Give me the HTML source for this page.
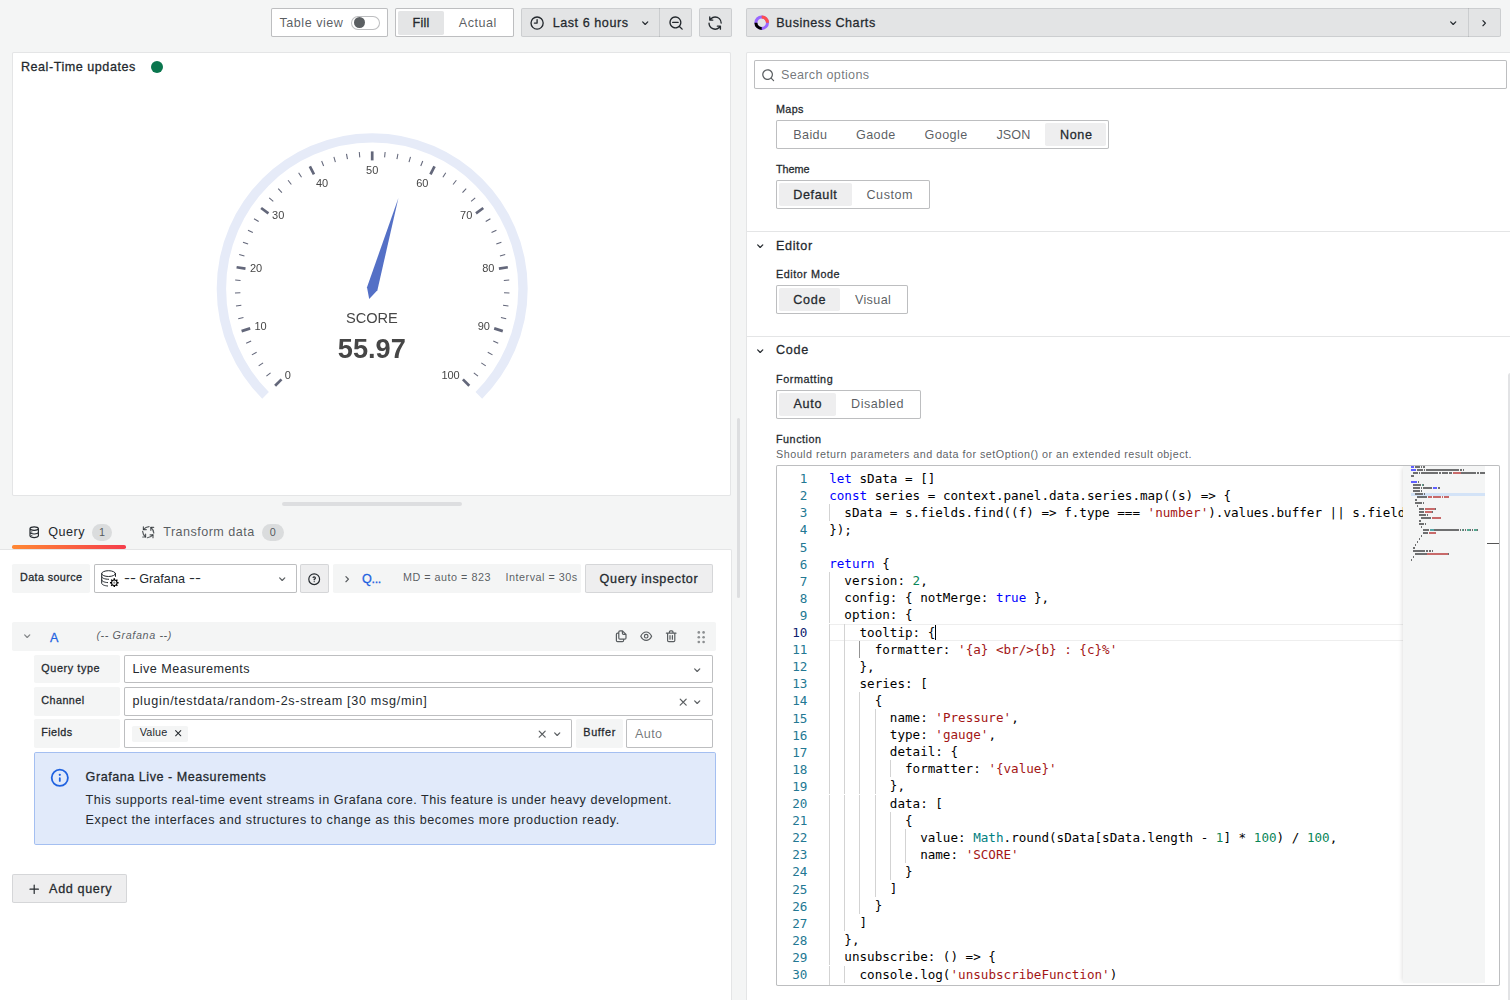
<!DOCTYPE html>
<html lang="en"><head><meta charset="utf-8"><title>Edit panel - Real-Time updates - Grafana</title><style>
html,body{margin:0;padding:0}
body{width:1510px;height:1000px;overflow:hidden;background:#f4f5f5;font-family:'Liberation Sans', sans-serif;font-size:12.6px;color:rgb(36,41,46);position:relative}
#root{position:absolute;left:0;top:0;width:1510px;height:1000px;overflow:hidden}
.b{position:absolute;box-sizing:border-box}
.t{position:absolute;white-space:pre;color:rgb(36,41,46)}
.ic{position:absolute;display:block;overflow:visible}
.sec{color:rgba(36,41,46,0.75)}
.med{font-weight:400;-webkit-text-stroke:0.27px currentColor}
.inp{background:#fff;border:1px solid rgba(36,41,46,0.30);border-radius:1.8px}
.sel{background:rgba(36,41,46,0.12);border-radius:1.8px}
.sel2{background:rgba(36,41,46,0.08);border-radius:1.8px}
.tb{background:rgba(36,41,46,0.08);border:1px solid rgba(36,41,46,0.12);border-radius:1.8px}
.btn{background:rgba(36,41,46,0.08);border:1px solid rgba(36,41,46,0.12);border-radius:1.8px}
.lab{background:#f4f5f5;border-radius:1.8px}
.badge{background:rgba(36,41,46,0.12);border-radius:9px}
.panel{background:#fff;border:1px solid rgba(36,41,46,0.12);border-radius:1.8px}
.cl{position:absolute;white-space:pre;font-family:'DejaVu Sans Mono', 'Liberation Mono', monospace;font-size:12.6px;height:17.1px;line-height:17.1px}
</style></head>
<body><div id="root">
<div class="b inp" style="left:271.20px;top:8.10px;width:116.40px;height:28.80px;"></div>
<div class="t sec" style="left:279.50px;top:12.70px;height:20.2px;line-height:20.2px;font-size:12.6px;"><span style="letter-spacing:0.510px;margin-right:-0.510px">Table view</span></div>
<div class="b " style="left:350.90px;top:15.60px;width:28.80px;height:14.40px;border:1px solid rgba(36,41,46,0.30);border-radius:8px;background:#fff"></div>
<div class="b " style="left:353.70px;top:17.30px;width:11.20px;height:11.20px;border-radius:50%;background:rgb(91,95,98)"></div>
<div class="b inp" style="left:395.20px;top:8.10px;width:118.50px;height:28.80px;"></div>
<div class="b sel" style="left:397.90px;top:11.00px;width:46.00px;height:23.80px;"></div>
<div class="t med" style="left:320.90px;width:200px;text-align:center;top:12.70px;height:20.2px;line-height:20.2px;font-size:12.6px;"><span style="letter-spacing:0.302px;margin-right:-0.302px">Fill</span></div>
<div class="t sec" style="left:377.60px;width:200px;text-align:center;top:12.70px;height:20.2px;line-height:20.2px;font-size:12.6px;"><span style="letter-spacing:0.497px;margin-right:-0.497px">Actual</span></div>
<div class="b tb" style="left:521.20px;top:8.10px;width:170.50px;height:28.80px;"></div>
<div class="b " style="left:659.00px;top:8.10px;width:1.00px;height:28.80px;background:rgba(36,41,46,0.12)"></div>
<svg class="ic" style="left:528.90px;top:14.70px;width:16.2px;height:16.2px;color:rgb(36,41,46)" viewBox="0 0 24 24" fill="currentColor"><path d="M12,2A10,10,0,1,0,22,12,10.01,10.01,0,0,0,12,2Zm0,18a8,8,0,1,1,8-8A8.01,8.01,0,0,1,12,20ZM12,6a1,1,0,0,0-1,1v4H8a1,1,0,0,0,0,2h4a1,1,0,0,0,1-1V7A1,1,0,0,0,12,6Z"/></svg>
<div class="t med" style="left:552.70px;top:12.70px;height:20.2px;line-height:20.2px;font-size:12.6px;"><span style="letter-spacing:0.544px;margin-right:-0.544px">Last 6 hours</span></div>
<svg class="ic" style="left:638.00px;top:15.60px;width:14.4px;height:14.4px;color:rgb(36,41,46)" viewBox="0 0 24 24" fill="currentColor"><path d="M17,9.17a1,1,0,0,0-1.41,0L12,12.71,8.46,9.17a1,1,0,0,0-1.41,0,1,1,0,0,0,0,1.42l4.24,4.24a1,1,0,0,0,1.42,0L17,10.59A1,1,0,0,0,17,9.17Z"/></svg>
<svg class="ic" style="left:667.70px;top:14.70px;width:16.2px;height:16.2px;color:rgb(36,41,46)" viewBox="0 0 24 24" fill="currentColor"><path d="M21.71,20.29,18,16.61A9,9,0,1,0,16.61,18l3.68,3.68a1,1,0,0,0,1.42,0A1,1,0,0,0,21.71,20.29ZM11,18a7,7,0,1,1,7-7A7,7,0,0,1,11,18Zm4-8H7a1,1,0,0,0,0,2h8a1,1,0,0,0,0-2Z"/></svg>
<div class="b tb" style="left:699.10px;top:8.10px;width:32.70px;height:28.80px;"></div>
<svg class="ic" style="left:707.20px;top:14.70px;width:16.2px;height:16.2px;color:rgb(36,41,46)" viewBox="0 0 24 24" fill="currentColor"><path d="M19.91,15.51H15.38a1,1,0,0,0,0,2h2.4A8,8,0,0,1,4,12a1,1,0,0,0-2,0,10,10,0,0,0,16.88,7.23V21a1,1,0,0,0,2,0V16.5A1,1,0,0,0,19.91,15.51ZM12,2A10,10,0,0,0,5.12,4.77V3a1,1,0,0,0-2,0V7.5a1,1,0,0,0,1,1h4.5a1,1,0,0,0,0-2H6.22A8,8,0,0,1,20,12a1,1,0,0,0,2,0A10,10,0,0,0,12,2Z"/></svg>
<div class="b tb" style="left:746.40px;top:8.10px;width:755.00px;height:28.80px;"></div>
<div class="b " style="left:1468.00px;top:8.10px;width:1.00px;height:28.80px;background:rgba(36,41,46,0.12)"></div>
<svg class="ic" style="left:753.80px;top:15.00px;width:15.4px;height:15.4px" viewBox="-7.7 -7.7 15.4 15.4">
<circle r="5.8" fill="none" stroke="#9966ff" stroke-width="3"/>
<path d="M0,-5.8A5.8,5.8,0,0,1,5.8,0" fill="none" stroke="#ff4d4d" stroke-width="3"/>
<path d="M-5.8,0A5.8,5.8,0,0,0,0,5.8" fill="none" stroke="#000" stroke-width="3"/></svg>
<div class="t med" style="left:776.20px;top:12.70px;height:20.2px;line-height:20.2px;font-size:12.6px;"><span style="letter-spacing:0.521px;margin-right:-0.521px">Business Charts</span></div>
<svg class="ic" style="left:1445.80px;top:15.60px;width:14.4px;height:14.4px;color:rgb(36,41,46)" viewBox="0 0 24 24" fill="currentColor"><path d="M17,9.17a1,1,0,0,0-1.41,0L12,12.71,8.46,9.17a1,1,0,0,0-1.41,0,1,1,0,0,0,0,1.42l4.24,4.24a1,1,0,0,0,1.42,0L17,10.59A1,1,0,0,0,17,9.17Z"/></svg>
<svg class="ic" style="left:1476.80px;top:15.60px;width:14.4px;height:14.4px;color:rgb(36,41,46)" viewBox="0 0 24 24" fill="currentColor"><path d="M14.83,11.29,10.59,7.05a1,1,0,0,0-1.42,0,1,1,0,0,0,0,1.41L12.71,12,9.17,15.54a1,1,0,0,0,0,1.41,1,1,0,0,0,.71.29,1,1,0,0,0,.71-.29l4.24-4.24A1,1,0,0,0,14.83,11.29Z"/></svg>
<div class="b panel" style="left:12.00px;top:52.00px;width:719.00px;height:444.00px;"></div>
<div class="t med" style="left:20.90px;top:56.60px;height:20.2px;line-height:20.2px;font-size:12.6px;"><span style="letter-spacing:0.529px;margin-right:-0.529px">Real-Time updates</span></div>
<div class="b " style="left:151.00px;top:60.90px;width:12.00px;height:12.00px;border-radius:50%;background:#0A764E"></div>
<div class="b " style="left:282.00px;top:502.00px;width:180.00px;height:4.00px;background:rgb(221,222,224);border-radius:2px"></div>
<div class="b " style="left:736.80px;top:418.00px;width:3.40px;height:179.50px;background:rgb(221,222,224);border-radius:2px"></div>
<svg class="ic" style="left:26.70px;top:524.60px;width:14.4px;height:14.4px;color:rgb(36,41,46)" viewBox="0 0 24 24" fill="currentColor"><path d="M8,16.5a1,1,0,1,0,1,1A1,1,0,0,0,8,16.5ZM12,2C8,2,4,3.37,4,6V18c0,2.63,4,4,8,4s8-1.37,8-4V6C20,3.37,16,2,12,2Zm6,16c0,.71-2.28,2-6,2s-6-1.29-6-2V14.73A13.16,13.16,0,0,0,12,16a13.16,13.16,0,0,0,6-1.27Zm0-6c0,.71-2.28,2-6,2s-6-1.29-6-2V8.73A13.16,13.16,0,0,0,12,10a13.16,13.16,0,0,0,6-1.27ZM12,8C8.28,8,6,6.71,6,6s2.28-2,6-2,6,1.290,6,2S15.72,8,12,8ZM8,10.5a1,1,0,1,0,1,1A1,1,0,0,0,8,10.5Z"/></svg>
<div class="t " style="left:48.30px;top:521.90px;height:20.2px;line-height:20.2px;font-size:12.6px;"><span style="letter-spacing:0.501px;margin-right:-0.501px">Query</span></div>
<div class="b badge" style="left:92.10px;top:524.20px;width:19.80px;height:16.60px;"></div>
<div class="t sec" style="left:92.00px;width:20px;text-align:center;top:523.55px;height:17.3px;line-height:17.3px;font-size:10.8px;">1</div>
<div class="b " style="left:12.00px;top:545.20px;width:113.70px;height:3.60px;background:linear-gradient(90deg,#FF8833 0%,#F53E4C 100%);border-radius:1.8px"></div>
<svg class="ic" style="left:140.80px;top:524.80px;width:14.4px;height:14.4px;color:rgba(36,41,46,0.75)" viewBox="0 0 24 24" fill="currentColor"><g fill="none" stroke="currentColor" stroke-width="2" stroke-linecap="round" stroke-linejoin="round"><g transform="rotate(0 12 12)"><path d="M13.4,2.700Q7.600,3.300,4.200,7.400"/><path d="M4,2.900V7.600H8.900"/></g><g transform="rotate(-90 12 12)"><path d="M13.4,2.700Q7.600,3.300,4.200,7.400"/><path d="M4,2.900V7.600H8.900"/></g><g transform="rotate(-180 12 12)"><path d="M13.4,2.700Q7.600,3.300,4.200,7.400"/><path d="M4,2.900V7.600H8.900"/></g><g transform="rotate(-270 12 12)"><path d="M13.4,2.700Q7.600,3.300,4.200,7.400"/><path d="M4,2.900V7.600H8.900"/></g></g></svg>
<div class="t sec" style="left:163.20px;top:521.90px;height:20.2px;line-height:20.2px;font-size:12.6px;"><span style="letter-spacing:0.468px;margin-right:-0.468px">Transform data</span></div>
<div class="b badge" style="left:262.10px;top:524.20px;width:21.50px;height:16.60px;"></div>
<div class="t sec" style="left:262.85px;width:20px;text-align:center;top:523.55px;height:17.3px;line-height:17.3px;font-size:10.8px;">0</div>
<div class="b panel" style="left:-1.00px;top:549.20px;width:732.50px;height:460.00px;border-radius:0 1.8px 0 0"></div>
<div class="b lab" style="left:12.00px;top:564.10px;width:77.60px;height:28.80px;"></div>
<div class="t med" style="left:20.00px;top:568.65px;height:17.3px;line-height:17.3px;font-size:10.8px;"><span style="letter-spacing:0.378px;margin-right:-0.378px">Data source</span></div>
<div class="b inp" style="left:94.10px;top:564.10px;width:202.80px;height:28.80px;"></div>
<svg class="ic" style="left:101px;top:569.9px;width:18px;height:18px" viewBox="0 0 18 18" fill="none" stroke="#24292e" stroke-width="1" stroke-linecap="round">
<ellipse cx="7.6" cy="3.6" rx="6.9" ry="2.9"/>
<path d="M0.7,3.6V13.2C0.7,14.6 3.2,15.7 6.6,16"/>
<path d="M14.5,3.6V6.4"/>
<path d="M0.7,6.8C0.7,8 3.4,9.2 7.6,9.3"/>
<path d="M0.7,10C0.7,11.2 3,12.3 6.6,12.6"/>
<g transform="translate(13.3,12.7)" stroke="none"><path fill="#000" fill-rule="evenodd" d="M4.34,-0.70L4.34,0.70L3.21,0.75L2.80,1.74L3.57,2.58L2.58,3.57L1.74,2.80L0.75,3.21L0.70,4.34L-0.70,4.34L-0.75,3.21L-1.74,2.80L-2.58,3.57L-3.57,2.58L-2.80,1.74L-3.21,0.75L-4.34,0.70L-4.34,-0.70L-3.21,-0.75L-2.80,-1.74L-3.57,-2.58L-2.58,-3.57L-1.74,-2.80L-0.75,-3.21L-0.70,-4.34L0.70,-4.34L0.75,-3.21L1.74,-2.80L2.58,-3.57L3.57,-2.58L2.80,-1.74L3.21,-0.75ZM2.2,0A2.2,2.2,0,1,0,-2.2,0A2.2,2.2,0,1,0,2.2,0Z"/><circle r="1.1" fill="#8a8a8a"/></g></svg>
<div class="t " style="left:124.00px;top:568.80px;height:20.2px;line-height:20.2px;font-size:12.6px;"><span style="display:inline-block;position:relative;top:-0.7px;transform:scaleX(1.42);transform-origin:0 50%;width:11.9px">--</span><span style="display:inline-block;width:3.3px"> </span><span style="letter-spacing:0.047px;margin-right:-0.047px">Grafana</span><span style="display:inline-block;width:4.5px"> </span><span style="display:inline-block;position:relative;top:-0.7px;transform:scaleX(1.42);transform-origin:0 50%;width:11.9px">--</span></div>
<svg class="ic" style="left:274.90px;top:571.70px;width:14.4px;height:14.4px;color:rgba(36,41,46,0.75)" viewBox="0 0 24 24" fill="currentColor"><path d="M17,9.17a1,1,0,0,0-1.41,0L12,12.71,8.46,9.17a1,1,0,0,0-1.41,0,1,1,0,0,0,0,1.42l4.24,4.24a1,1,0,0,0,1.42,0L17,10.59A1,1,0,0,0,17,9.17Z"/></svg>
<div class="b btn" style="left:300.10px;top:564.10px;width:28.80px;height:28.80px;"></div>
<svg class="ic" style="left:307.40px;top:571.80px;width:14.4px;height:14.4px;color:rgb(36,41,46)" viewBox="0 0 24 24" fill="currentColor"><path d="M11.29,15.29a1.58,1.58,0,0,0-.12.15.76.76,0,0,0-.09.18.64.64,0,0,0-.06.18,1.36,1.36,0,0,0,0,.2.84.84,0,0,0,.08.38.9.9,0,0,0,.54.54.94.94,0,0,0,.76,0,.9.9,0,0,0,.54-.54A1,1,0,0,0,13,16a1,1,0,0,0-.29-.71A1,1,0,0,0,11.29,15.29ZM12,2A10,10,0,1,0,22,12,10,10,0,0,0,12,2Zm0,18a8,8,0,1,1,8-8A8,8,0,0,1,12,20ZM12,7A3,3,0,0,0,9.4,8.5a1,1,0,1,0,1.73,1A1,1,0,0,1,12,9a1,1,0,0,1,0,2,1,1,0,0,0-1,1v1a1,1,0,0,0,2,0v-.18A3,3,0,0,0,12,7Z"/></svg>
<div class="b lab" style="left:333.10px;top:564.10px;width:247.70px;height:28.80px;"></div>
<svg class="ic" style="left:339.50px;top:571.70px;width:14.4px;height:14.4px;color:rgba(36,41,46,0.75)" viewBox="0 0 24 24" fill="currentColor"><path d="M14.83,11.29,10.59,7.05a1,1,0,0,0-1.42,0,1,1,0,0,0,0,1.41L12.71,12,9.17,15.54a1,1,0,0,0,0,1.41,1,1,0,0,0,.71.29,1,1,0,0,0,.71-.29l4.24-4.24A1,1,0,0,0,14.83,11.29Z"/></svg>
<div class="t med" style="left:362.10px;top:568.60px;height:20.2px;line-height:20.2px;font-size:12.6px;color:#1F62E0"><span style="letter-spacing:-0.366px;margin-right:0.366px">Q...</span></div>
<div class="t sec" style="left:403.00px;top:568.75px;height:17.3px;line-height:17.3px;font-size:10.8px;"><span style="letter-spacing:0.497px;margin-right:-0.497px">MD = auto = 823</span></div>
<div class="t sec" style="left:505.50px;top:568.75px;height:17.3px;line-height:17.3px;font-size:10.8px;"><span style="letter-spacing:0.506px;margin-right:-0.506px">Interval = 30s</span></div>
<div class="b btn" style="left:585.30px;top:564.10px;width:127.50px;height:28.80px;"></div>
<div class="t med" style="left:599.50px;top:568.60px;height:20.2px;line-height:20.2px;font-size:12.6px;"><span style="letter-spacing:0.664px;margin-right:-0.664px">Query inspector</span></div>
<div class="b lab" style="left:12.00px;top:622.00px;width:703.90px;height:28.80px;"></div>
<svg class="ic" style="left:19.60px;top:629.10px;width:14.4px;height:14.4px;color:rgba(36,41,46,0.55)" viewBox="0 0 24 24" fill="currentColor"><path d="M17,9.17a1,1,0,0,0-1.41,0L12,12.71,8.46,9.17a1,1,0,0,0-1.41,0,1,1,0,0,0,0,1.42l4.24,4.24a1,1,0,0,0,1.42,0L17,10.59A1,1,0,0,0,17,9.17Z"/></svg>
<div class="t med" style="left:50.10px;top:627.50px;height:20.2px;line-height:20.2px;font-size:12.6px;color:#1F62E0"><span style="letter-spacing:-0.406px;margin-right:0.406px">A</span></div>
<div class="t sec" style="left:96.40px;top:627.35px;height:17.3px;line-height:17.3px;font-size:10.8px;font-style:italic"><span style="letter-spacing:0.600px;margin-right:-0.600px">(-- Grafana --)</span></div>
<svg class="ic" style="left:613.60px;top:629.00px;width:14.4px;height:14.4px;color:rgba(36,41,46,0.75)" viewBox="0 0 24 24" fill="currentColor"><path d="M21,8.94a1.31,1.31,0,0,0-.06-.27l0-.09a1.07,1.07,0,0,0-.19-.28h0l-6-6h0a1.07,1.07,0,0,0-.28-.19.32.32,0,0,0-.09,0A.88.88,0,0,0,14.05,2H10A3,3,0,0,0,7,5V6H6A3,3,0,0,0,3,9V19a3,3,0,0,0,3,3h8a3,3,0,0,0,3-3V18h1a3,3,0,0,0,3-3V9S21,9,21,8.94ZM15,5.41,17.59,8H16a1,1,0,0,1-1-1ZM15,19a1,1,0,0,1-1,1H6a1,1,0,0,1-1-1V9A1,1,0,0,1,6,8H7v7a3,3,0,0,0,3,3h5Zm4-4a1,1,0,0,1-1,1H10a1,1,0,0,1-1-1V5a1,1,0,0,1,1-1h3V7a3,3,0,0,0,3,3h3Z"/></svg>
<svg class="ic" style="left:639.10px;top:629.00px;width:14.4px;height:14.4px;color:rgba(36,41,46,0.75)" viewBox="0 0 24 24" fill="currentColor"><path d="M21.92,11.6C19.9,6.91,16.1,4,12,4S4.1,6.91,2.08,11.6a1,1,0,0,0,0,.8C4.1,17.09,7.9,20,12,20s7.9-2.91,9.92-7.6A1,1,0,0,0,21.92,11.6ZM12,18c-3.17,0-6.17-2.29-7.9-6C5.83,8.29,8.83,6,12,6s6.17,2.29,7.9,6C18.17,15.71,15.17,18,12,18ZM12,8a4,4,0,1,0,4,4A4,4,0,0,0,12,8Zm0,6a2,2,0,1,1,2-2A2,2,0,0,1,12,14Z"/></svg>
<svg class="ic" style="left:664.20px;top:629.00px;width:14.4px;height:14.4px;color:rgba(36,41,46,0.75)" viewBox="0 0 24 24" fill="currentColor"><path d="M10,18a1,1,0,0,0,1-1V11a1,1,0,0,0-2,0v6A1,1,0,0,0,10,18ZM20,6H16V5a3,3,0,0,0-3-3H11A3,3,0,0,0,8,5V6H4A1,1,0,0,0,4,8H5V19a3,3,0,0,0,3,3h8a3,3,0,0,0,3-3V8h1a1,1,0,0,0,0-2ZM10,5a1,1,0,0,1,1-1h2a1,1,0,0,1,1,1V6H10Zm7,14a1,1,0,0,1-1,1H8a1,1,0,0,1-1-1V8H17Zm-3-1a1,1,0,0,0,1-1V11a1,1,0,0,0-2,0v6A1,1,0,0,0,14,18Z"/></svg>
<svg class="ic" style="left:694.00px;top:629.90px;width:14.4px;height:14.4px;color:rgba(36,41,46,0.5)" viewBox="0 0 24 24" fill="currentColor"><circle cx="8" cy="4" r="2.2"/><circle cx="16" cy="4" r="2.2"/><circle cx="8" cy="12" r="2.2"/><circle cx="16" cy="12" r="2.2"/><circle cx="8" cy="20" r="2.2"/><circle cx="16" cy="20" r="2.2"/></svg>
<div class="b lab" style="left:34.00px;top:655.00px;width:85.60px;height:28.00px;"></div>
<div class="t med" style="left:41.30px;top:659.75px;height:17.3px;line-height:17.3px;font-size:10.8px;"><span style="letter-spacing:0.610px;margin-right:-0.610px">Query type</span></div>
<div class="b lab" style="left:34.00px;top:687.00px;width:85.60px;height:29.00px;"></div>
<div class="t med" style="left:41.30px;top:692.25px;height:17.3px;line-height:17.3px;font-size:10.8px;"><span style="letter-spacing:0.428px;margin-right:-0.428px">Channel</span></div>
<div class="b lab" style="left:34.00px;top:719.00px;width:85.60px;height:29.00px;"></div>
<div class="t med" style="left:41.30px;top:724.25px;height:17.3px;line-height:17.3px;font-size:10.8px;"><span style="letter-spacing:0.398px;margin-right:-0.398px">Fields</span></div>
<div class="b inp" style="left:124.40px;top:655.00px;width:588.30px;height:28.00px;"></div>
<div class="t " style="left:132.40px;top:659.10px;height:20.2px;line-height:20.2px;font-size:12.6px;"><span style="letter-spacing:0.456px;margin-right:-0.456px">Live Measurements</span></div>
<svg class="ic" style="left:690.20px;top:663.20px;width:14.4px;height:14.4px;color:rgba(36,41,46,0.75)" viewBox="0 0 24 24" fill="currentColor"><path d="M17,9.17a1,1,0,0,0-1.41,0L12,12.71,8.46,9.17a1,1,0,0,0-1.41,0,1,1,0,0,0,0,1.42l4.24,4.24a1,1,0,0,0,1.42,0L17,10.59A1,1,0,0,0,17,9.17Z"/></svg>
<div class="b inp" style="left:124.40px;top:687.00px;width:588.30px;height:29.00px;"></div>
<div class="t " style="left:132.40px;top:691.10px;height:20.2px;line-height:20.2px;font-size:12.6px;"><span style="letter-spacing:0.693px;margin-right:-0.693px">plugin/testdata/random-2s-stream [30 msg/min]</span></div>
<svg class="ic" style="left:675.70px;top:694.60px;width:14.4px;height:14.4px;color:rgba(36,41,46,0.75)" viewBox="0 0 24 24" fill="currentColor"><path d="M13.41,12l4.3-4.29a1,1,0,1,0-1.42-1.42L12,10.59,7.71,6.29A1,1,0,0,0,6.29,7.71L10.59,12l-4.3,4.29a1,1,0,0,0,0,1.42,1,1,0,0,0,1.42,0L12,13.41l4.29,4.3a1,1,0,0,0,1.42,0,1,1,0,0,0,0-1.42Z"/></svg>
<svg class="ic" style="left:690.00px;top:694.60px;width:14.4px;height:14.4px;color:rgba(36,41,46,0.75)" viewBox="0 0 24 24" fill="currentColor"><path d="M17,9.17a1,1,0,0,0-1.41,0L12,12.71,8.46,9.17a1,1,0,0,0-1.41,0,1,1,0,0,0,0,1.42l4.24,4.24a1,1,0,0,0,1.42,0L17,10.59A1,1,0,0,0,17,9.17Z"/></svg>
<div class="b inp" style="left:124.40px;top:719.00px;width:448.00px;height:29.00px;"></div>
<div class="b " style="left:131.90px;top:726.00px;width:55.80px;height:16.00px;background:#f4f5f5;border-radius:1.8px"></div>
<div class="t " style="left:139.70px;top:723.65px;height:17.3px;line-height:17.3px;font-size:10.8px;"><span style="letter-spacing:0.168px;margin-right:-0.168px">Value</span></div>
<svg class="ic" style="left:171.90px;top:726.80px;width:12.4px;height:12.4px;color:rgb(36,41,46)" viewBox="0 0 24 24" fill="currentColor"><path d="M13.41,12l4.3-4.29a1,1,0,1,0-1.42-1.42L12,10.59,7.71,6.29A1,1,0,0,0,6.29,7.71L10.59,12l-4.3,4.29a1,1,0,0,0,0,1.42,1,1,0,0,0,1.42,0L12,13.41l4.29,4.3a1,1,0,0,0,1.42,0,1,1,0,0,0,0-1.42Z"/></svg>
<svg class="ic" style="left:534.80px;top:726.80px;width:14.4px;height:14.4px;color:rgba(36,41,46,0.75)" viewBox="0 0 24 24" fill="currentColor"><path d="M13.41,12l4.3-4.29a1,1,0,1,0-1.42-1.42L12,10.59,7.71,6.29A1,1,0,0,0,6.29,7.71L10.59,12l-4.3,4.29a1,1,0,0,0,0,1.42,1,1,0,0,0,1.42,0L12,13.41l4.29,4.3a1,1,0,0,0,1.42,0,1,1,0,0,0,0-1.42Z"/></svg>
<svg class="ic" style="left:549.50px;top:726.80px;width:14.4px;height:14.4px;color:rgba(36,41,46,0.75)" viewBox="0 0 24 24" fill="currentColor"><path d="M17,9.17a1,1,0,0,0-1.41,0L12,12.71,8.46,9.17a1,1,0,0,0-1.41,0,1,1,0,0,0,0,1.42l4.24,4.24a1,1,0,0,0,1.42,0L17,10.59A1,1,0,0,0,17,9.17Z"/></svg>
<div class="b lab" style="left:576.00px;top:719.00px;width:46.80px;height:29.00px;"></div>
<div class="t med" style="left:583.30px;top:723.55px;height:17.3px;line-height:17.3px;font-size:10.8px;"><span style="letter-spacing:0.675px;margin-right:-0.675px">Buffer</span></div>
<div class="b inp" style="left:626.10px;top:719.00px;width:86.60px;height:29.00px;"></div>
<div class="t " style="left:635.10px;top:723.90px;height:20.2px;line-height:20.2px;font-size:12.6px;color:rgba(36,41,46,0.64)"><span style="letter-spacing:0.359px;margin-right:-0.359px">Auto</span></div>
<div class="b " style="left:34.00px;top:752.00px;width:681.80px;height:93.00px;background:rgb(225,234,250);border:1px solid rgb(164,191,241);border-radius:1.8px"></div>
<svg class="ic" style="left:48.80px;top:766.70px;width:21.6px;height:21.6px;color:#1F62E0" viewBox="0 0 24 24" fill="currentColor"><path d="M12,2A10,10,0,1,0,22,12,10.01,10.01,0,0,0,12,2Zm0,18a8,8,0,1,1,8-8A8.01,8.01,0,0,1,12,20Zm0-8.5a1,1,0,0,0-1,1v3a1,1,0,0,0,2,0v-3A1,1,0,0,0,12,11.5Zm0-4a1.25,1.25,0,1,0,1.25,1.25A1.25,1.25,0,0,0,12,7.5Z"/></svg>
<div class="t med" style="left:85.60px;top:766.50px;height:20.2px;line-height:20.2px;font-size:12.6px;"><span style="letter-spacing:0.523px;margin-right:-0.523px">Grafana Live - Measurements</span></div>
<div class="t " style="left:85.60px;top:789.50px;height:20.2px;line-height:20.2px;font-size:12.6px;"><span style="letter-spacing:0.502px;margin-right:-0.502px">This supports real-time event streams in Grafana core. This feature is under heavy development.</span></div>
<div class="t " style="left:85.60px;top:810.40px;height:20.2px;line-height:20.2px;font-size:12.6px;"><span style="letter-spacing:0.563px;margin-right:-0.563px">Expect the interfaces and structures to change as this becomes more production ready.</span></div>
<div class="b btn" style="left:12.00px;top:874.40px;width:114.70px;height:28.80px;"></div>
<svg class="ic" style="left:26.80px;top:881.60px;width:14.4px;height:14.4px;color:rgb(36,41,46)" viewBox="0 0 24 24" fill="currentColor"><path d="M19,11H13V5a1,1,0,0,0-2,0v6H5a1,1,0,0,0,0,2h6v6a1,1,0,0,0,2,0V13h6a1,1,0,0,0,0-2Z"/></svg>
<div class="t med" style="left:49.10px;top:878.50px;height:20.2px;line-height:20.2px;font-size:12.6px;"><span style="letter-spacing:0.635px;margin-right:-0.635px">Add query</span></div>
<div class="b panel" style="left:746.00px;top:52.00px;width:770.00px;height:960.00px;border-radius:1.8px 0 0 0"></div>
<div class="b inp" style="left:754.30px;top:60.30px;width:753.00px;height:28.80px;"></div>
<svg class="ic" style="left:760.70px;top:67.50px;width:14.4px;height:14.4px;color:rgba(36,41,46,0.75)" viewBox="0 0 24 24" fill="currentColor"><path d="M21.71,20.29,18,16.61A9,9,0,1,0,16.61,18l3.68,3.68a1,1,0,0,0,1.42,0A1,1,0,0,0,21.71,20.29ZM11,18a7,7,0,1,1,7-7A7,7,0,0,1,11,18Z"/></svg>
<div class="t " style="left:781.00px;top:64.50px;height:20.2px;line-height:20.2px;font-size:12.6px;color:rgba(36,41,46,0.64)"><span style="letter-spacing:0.306px;margin-right:-0.306px">Search options</span></div>
<div class="t med" style="left:776.00px;top:101.35px;height:17.3px;line-height:17.3px;font-size:10.8px;"><span style="letter-spacing:0.365px;margin-right:-0.365px">Maps</span></div>
<div class="b inp" style="left:776.00px;top:119.90px;width:332.90px;height:28.80px;"></div>
<div class="t sec" style="left:710.10px;width:200px;text-align:center;top:125.20px;height:20.2px;line-height:20.2px;font-size:12.6px;"><span style="letter-spacing:0.345px;margin-right:-0.345px">Baidu</span></div>
<div class="t sec" style="left:775.70px;width:200px;text-align:center;top:125.20px;height:20.2px;line-height:20.2px;font-size:12.6px;"><span style="letter-spacing:0.347px;margin-right:-0.347px">Gaode</span></div>
<div class="t sec" style="left:845.90px;width:200px;text-align:center;top:125.20px;height:20.2px;line-height:20.2px;font-size:12.6px;"><span style="letter-spacing:0.435px;margin-right:-0.435px">Google</span></div>
<div class="t sec" style="left:913.40px;width:200px;text-align:center;top:125.20px;height:20.2px;line-height:20.2px;font-size:12.6px;"><span style="letter-spacing:0.069px;margin-right:-0.069px">JSON</span></div>
<div class="b sel2" style="left:1044.80px;top:122.60px;width:61.60px;height:23.40px;"></div>
<div class="t med" style="left:976.00px;width:200px;text-align:center;top:125.20px;height:20.2px;line-height:20.2px;font-size:12.6px;"><span style="letter-spacing:0.564px;margin-right:-0.564px">None</span></div>
<div class="t med" style="left:776.00px;top:160.55px;height:17.3px;line-height:17.3px;font-size:10.8px;"><span style="letter-spacing:-0.027px;margin-right:0.027px">Theme</span></div>
<div class="b inp" style="left:776.00px;top:180.10px;width:153.60px;height:28.80px;"></div>
<div class="b sel2" style="left:778.70px;top:182.80px;width:73.10px;height:23.40px;"></div>
<div class="t med" style="left:715.05px;width:200px;text-align:center;top:184.60px;height:20.2px;line-height:20.2px;font-size:12.6px;"><span style="letter-spacing:0.599px;margin-right:-0.599px">Default</span></div>
<div class="t sec" style="left:789.50px;width:200px;text-align:center;top:184.60px;height:20.2px;line-height:20.2px;font-size:12.6px;"><span style="letter-spacing:0.522px;margin-right:-0.522px">Custom</span></div>
<div class="b " style="left:747.00px;top:231.40px;width:770.00px;height:1.00px;background:rgba(36,41,46,0.12)"></div>
<svg class="ic" style="left:753.30px;top:239.10px;width:14.4px;height:14.4px;color:rgb(36,41,46)" viewBox="0 0 24 24" fill="currentColor"><path d="M17,9.17a1,1,0,0,0-1.41,0L12,12.71,8.46,9.17a1,1,0,0,0-1.41,0,1,1,0,0,0,0,1.42l4.24,4.24a1,1,0,0,0,1.42,0L17,10.59A1,1,0,0,0,17,9.17Z"/></svg>
<div class="t med" style="left:776.00px;top:236.10px;height:20.2px;line-height:20.2px;font-size:12.6px;"><span style="letter-spacing:0.639px;margin-right:-0.639px">Editor</span></div>
<div class="t med" style="left:776.00px;top:266.45px;height:17.3px;line-height:17.3px;font-size:10.8px;"><span style="letter-spacing:0.538px;margin-right:-0.538px">Editor Mode</span></div>
<div class="b inp" style="left:776.00px;top:285.00px;width:131.70px;height:28.80px;"></div>
<div class="b sel2" style="left:778.70px;top:287.70px;width:61.40px;height:23.40px;"></div>
<div class="t med" style="left:709.45px;width:200px;text-align:center;top:289.50px;height:20.2px;line-height:20.2px;font-size:12.6px;"><span style="letter-spacing:0.730px;margin-right:-0.730px">Code</span></div>
<div class="t sec" style="left:772.90px;width:200px;text-align:center;top:289.50px;height:20.2px;line-height:20.2px;font-size:12.6px;"><span style="letter-spacing:0.384px;margin-right:-0.384px">Visual</span></div>
<div class="b " style="left:747.00px;top:335.90px;width:770.00px;height:1.00px;background:rgba(36,41,46,0.12)"></div>
<svg class="ic" style="left:753.30px;top:344.10px;width:14.4px;height:14.4px;color:rgb(36,41,46)" viewBox="0 0 24 24" fill="currentColor"><path d="M17,9.17a1,1,0,0,0-1.41,0L12,12.71,8.46,9.17a1,1,0,0,0-1.41,0,1,1,0,0,0,0,1.42l4.24,4.24a1,1,0,0,0,1.42,0L17,10.59A1,1,0,0,0,17,9.17Z"/></svg>
<div class="t med" style="left:776.00px;top:339.60px;height:20.2px;line-height:20.2px;font-size:12.6px;"><span style="letter-spacing:0.730px;margin-right:-0.730px">Code</span></div>
<div class="t med" style="left:776.00px;top:370.55px;height:17.3px;line-height:17.3px;font-size:10.8px;"><span style="letter-spacing:0.566px;margin-right:-0.566px">Formatting</span></div>
<div class="b inp" style="left:776.00px;top:390.20px;width:144.70px;height:28.80px;"></div>
<div class="b sel2" style="left:778.70px;top:392.90px;width:57.00px;height:23.40px;"></div>
<div class="t med" style="left:707.50px;width:200px;text-align:center;top:393.70px;height:20.2px;line-height:20.2px;font-size:12.6px;"><span style="letter-spacing:0.759px;margin-right:-0.759px">Auto</span></div>
<div class="t sec" style="left:777.25px;width:200px;text-align:center;top:393.70px;height:20.2px;line-height:20.2px;font-size:12.6px;"><span style="letter-spacing:0.469px;margin-right:-0.469px">Disabled</span></div>
<div class="t med" style="left:776.00px;top:430.55px;height:17.3px;line-height:17.3px;font-size:10.8px;"><span style="letter-spacing:0.511px;margin-right:-0.511px">Function</span></div>
<div class="t sec" style="left:776.00px;top:445.85px;height:17.3px;line-height:17.3px;font-size:10.8px;"><span style="letter-spacing:0.472px;margin-right:-0.472px">Should return parameters and data for setOption() or an extended result object.</span></div>
<div class="b" style="left:776px;top:465px;width:723.5px;height:520.5px;border:1px solid rgba(36,41,46,0.30);border-radius:1.8px;background:#fff;overflow:hidden"><div class="b" style="left:0;top:0;width:625.60px;height:520.5px;overflow:hidden"><div class="b" style="left:52.15px;top:157.50px;width:700px;height:17.1px;box-sizing:border-box;border:1.8px solid #eee"></div><div class="cl" style="top:3.60px;left:0;width:30.30px;text-align:right;color:#237893">1</div><div class="cl" style="top:3.60px;left:52.15px;color:#000"><span style="color:#0000ff">let</span> sData = []</div><div class="cl" style="top:21.20px;left:0;width:30.30px;text-align:right;color:#237893">2</div><div class="cl" style="top:20.70px;left:52.15px;color:#000"><span style="color:#0000ff">const</span> series = context.panel.data.series.map((s) =&gt; {</div><div class="cl" style="top:38.30px;left:0;width:30.30px;text-align:right;color:#237893">3</div><div class="b" style="left:52.15px;top:37.80px;width:1px;height:17.1px;background:#d3d3d3"></div><div class="cl" style="top:37.80px;left:52.15px;color:#000">  sData = s.fields.find((f) =&gt; f.type === <span style="color:#a31515">'number'</span>).values.buffer || s.fields.find((f) =&gt; f.type === <span style="color:#a31515">'number'</span>).values;</div><div class="cl" style="top:55.40px;left:0;width:30.30px;text-align:right;color:#237893">4</div><div class="cl" style="top:54.90px;left:52.15px;color:#000">});</div><div class="cl" style="top:72.50px;left:0;width:30.30px;text-align:right;color:#237893">5</div><div class="cl" style="top:89.60px;left:0;width:30.30px;text-align:right;color:#237893">6</div><div class="cl" style="top:89.10px;left:52.15px;color:#000"><span style="color:#0000ff">return</span> {</div><div class="cl" style="top:106.70px;left:0;width:30.30px;text-align:right;color:#237893">7</div><div class="b" style="left:52.15px;top:106.20px;width:1px;height:17.1px;background:#d3d3d3"></div><div class="cl" style="top:106.20px;left:52.15px;color:#000">  version: <span style="color:#098658">2</span>,</div><div class="cl" style="top:123.80px;left:0;width:30.30px;text-align:right;color:#237893">8</div><div class="b" style="left:52.15px;top:123.30px;width:1px;height:17.1px;background:#d3d3d3"></div><div class="cl" style="top:123.30px;left:52.15px;color:#000">  config: { notMerge: <span style="color:#0000ff">true</span> },</div><div class="cl" style="top:140.90px;left:0;width:30.30px;text-align:right;color:#237893">9</div><div class="b" style="left:52.15px;top:140.40px;width:1px;height:17.1px;background:#d3d3d3"></div><div class="cl" style="top:140.40px;left:52.15px;color:#000">  option: {</div><div class="cl" style="top:158.00px;left:0;width:30.30px;text-align:right;color:#0B216F">10</div><div class="b" style="left:52.15px;top:157.50px;width:1px;height:17.1px;background:#d3d3d3"></div><div class="b" style="left:67.32px;top:157.50px;width:1px;height:17.1px;background:#d3d3d3"></div><div class="cl" style="top:157.50px;left:52.15px;color:#000">    tooltip: {</div><div class="cl" style="top:175.10px;left:0;width:30.30px;text-align:right;color:#237893">11</div><div class="b" style="left:52.15px;top:174.60px;width:1px;height:17.1px;background:#d3d3d3"></div><div class="b" style="left:67.32px;top:174.60px;width:1px;height:17.1px;background:#d3d3d3"></div><div class="b" style="left:82.49px;top:174.60px;width:1px;height:17.1px;background:#939393"></div><div class="cl" style="top:174.60px;left:52.15px;color:#000">      formatter: <span style="color:#a31515">'{a} &lt;br/&gt;{b} : {c}%'</span></div><div class="cl" style="top:192.20px;left:0;width:30.30px;text-align:right;color:#237893">12</div><div class="b" style="left:52.15px;top:191.70px;width:1px;height:17.1px;background:#d3d3d3"></div><div class="b" style="left:67.32px;top:191.70px;width:1px;height:17.1px;background:#d3d3d3"></div><div class="cl" style="top:191.70px;left:52.15px;color:#000">    },</div><div class="cl" style="top:209.30px;left:0;width:30.30px;text-align:right;color:#237893">13</div><div class="b" style="left:52.15px;top:208.80px;width:1px;height:17.1px;background:#d3d3d3"></div><div class="b" style="left:67.32px;top:208.80px;width:1px;height:17.1px;background:#d3d3d3"></div><div class="cl" style="top:208.80px;left:52.15px;color:#000">    series: [</div><div class="cl" style="top:226.40px;left:0;width:30.30px;text-align:right;color:#237893">14</div><div class="b" style="left:52.15px;top:225.90px;width:1px;height:17.1px;background:#d3d3d3"></div><div class="b" style="left:67.32px;top:225.90px;width:1px;height:17.1px;background:#d3d3d3"></div><div class="b" style="left:82.49px;top:225.90px;width:1px;height:17.1px;background:#d3d3d3"></div><div class="cl" style="top:225.90px;left:52.15px;color:#000">      {</div><div class="cl" style="top:243.50px;left:0;width:30.30px;text-align:right;color:#237893">15</div><div class="b" style="left:52.15px;top:243.00px;width:1px;height:17.1px;background:#d3d3d3"></div><div class="b" style="left:67.32px;top:243.00px;width:1px;height:17.1px;background:#d3d3d3"></div><div class="b" style="left:82.49px;top:243.00px;width:1px;height:17.1px;background:#d3d3d3"></div><div class="b" style="left:97.66px;top:243.00px;width:1px;height:17.1px;background:#d3d3d3"></div><div class="cl" style="top:243.00px;left:52.15px;color:#000">        name: <span style="color:#a31515">'Pressure'</span>,</div><div class="cl" style="top:260.60px;left:0;width:30.30px;text-align:right;color:#237893">16</div><div class="b" style="left:52.15px;top:260.10px;width:1px;height:17.1px;background:#d3d3d3"></div><div class="b" style="left:67.32px;top:260.10px;width:1px;height:17.1px;background:#d3d3d3"></div><div class="b" style="left:82.49px;top:260.10px;width:1px;height:17.1px;background:#d3d3d3"></div><div class="b" style="left:97.66px;top:260.10px;width:1px;height:17.1px;background:#d3d3d3"></div><div class="cl" style="top:260.10px;left:52.15px;color:#000">        type: <span style="color:#a31515">'gauge'</span>,</div><div class="cl" style="top:277.70px;left:0;width:30.30px;text-align:right;color:#237893">17</div><div class="b" style="left:52.15px;top:277.20px;width:1px;height:17.1px;background:#d3d3d3"></div><div class="b" style="left:67.32px;top:277.20px;width:1px;height:17.1px;background:#d3d3d3"></div><div class="b" style="left:82.49px;top:277.20px;width:1px;height:17.1px;background:#d3d3d3"></div><div class="b" style="left:97.66px;top:277.20px;width:1px;height:17.1px;background:#d3d3d3"></div><div class="cl" style="top:277.20px;left:52.15px;color:#000">        detail: {</div><div class="cl" style="top:294.80px;left:0;width:30.30px;text-align:right;color:#237893">18</div><div class="b" style="left:52.15px;top:294.30px;width:1px;height:17.1px;background:#d3d3d3"></div><div class="b" style="left:67.32px;top:294.30px;width:1px;height:17.1px;background:#d3d3d3"></div><div class="b" style="left:82.49px;top:294.30px;width:1px;height:17.1px;background:#d3d3d3"></div><div class="b" style="left:97.66px;top:294.30px;width:1px;height:17.1px;background:#d3d3d3"></div><div class="b" style="left:112.83px;top:294.30px;width:1px;height:17.1px;background:#d3d3d3"></div><div class="cl" style="top:294.30px;left:52.15px;color:#000">          formatter: <span style="color:#a31515">'{value}'</span></div><div class="cl" style="top:311.90px;left:0;width:30.30px;text-align:right;color:#237893">19</div><div class="b" style="left:52.15px;top:311.40px;width:1px;height:17.1px;background:#d3d3d3"></div><div class="b" style="left:67.32px;top:311.40px;width:1px;height:17.1px;background:#d3d3d3"></div><div class="b" style="left:82.49px;top:311.40px;width:1px;height:17.1px;background:#d3d3d3"></div><div class="b" style="left:97.66px;top:311.40px;width:1px;height:17.1px;background:#d3d3d3"></div><div class="cl" style="top:311.40px;left:52.15px;color:#000">        },</div><div class="cl" style="top:329.00px;left:0;width:30.30px;text-align:right;color:#237893">20</div><div class="b" style="left:52.15px;top:328.50px;width:1px;height:17.1px;background:#d3d3d3"></div><div class="b" style="left:67.32px;top:328.50px;width:1px;height:17.1px;background:#d3d3d3"></div><div class="b" style="left:82.49px;top:328.50px;width:1px;height:17.1px;background:#d3d3d3"></div><div class="b" style="left:97.66px;top:328.50px;width:1px;height:17.1px;background:#d3d3d3"></div><div class="cl" style="top:328.50px;left:52.15px;color:#000">        data: [</div><div class="cl" style="top:346.10px;left:0;width:30.30px;text-align:right;color:#237893">21</div><div class="b" style="left:52.15px;top:345.60px;width:1px;height:17.1px;background:#d3d3d3"></div><div class="b" style="left:67.32px;top:345.60px;width:1px;height:17.1px;background:#d3d3d3"></div><div class="b" style="left:82.49px;top:345.60px;width:1px;height:17.1px;background:#d3d3d3"></div><div class="b" style="left:97.66px;top:345.60px;width:1px;height:17.1px;background:#d3d3d3"></div><div class="b" style="left:112.83px;top:345.60px;width:1px;height:17.1px;background:#d3d3d3"></div><div class="cl" style="top:345.60px;left:52.15px;color:#000">          {</div><div class="cl" style="top:363.20px;left:0;width:30.30px;text-align:right;color:#237893">22</div><div class="b" style="left:52.15px;top:362.70px;width:1px;height:17.1px;background:#d3d3d3"></div><div class="b" style="left:67.32px;top:362.70px;width:1px;height:17.1px;background:#d3d3d3"></div><div class="b" style="left:82.49px;top:362.70px;width:1px;height:17.1px;background:#d3d3d3"></div><div class="b" style="left:97.66px;top:362.70px;width:1px;height:17.1px;background:#d3d3d3"></div><div class="b" style="left:112.83px;top:362.70px;width:1px;height:17.1px;background:#d3d3d3"></div><div class="b" style="left:128.00px;top:362.70px;width:1px;height:17.1px;background:#d3d3d3"></div><div class="cl" style="top:362.70px;left:52.15px;color:#000">            value: <span style="color:#008080">Math</span>.round(sData[sData.length - <span style="color:#098658">1</span>] * <span style="color:#098658">100</span>) / <span style="color:#098658">100</span>,</div><div class="cl" style="top:380.30px;left:0;width:30.30px;text-align:right;color:#237893">23</div><div class="b" style="left:52.15px;top:379.80px;width:1px;height:17.1px;background:#d3d3d3"></div><div class="b" style="left:67.32px;top:379.80px;width:1px;height:17.1px;background:#d3d3d3"></div><div class="b" style="left:82.49px;top:379.80px;width:1px;height:17.1px;background:#d3d3d3"></div><div class="b" style="left:97.66px;top:379.80px;width:1px;height:17.1px;background:#d3d3d3"></div><div class="b" style="left:112.83px;top:379.80px;width:1px;height:17.1px;background:#d3d3d3"></div><div class="b" style="left:128.00px;top:379.80px;width:1px;height:17.1px;background:#d3d3d3"></div><div class="cl" style="top:379.80px;left:52.15px;color:#000">            name: <span style="color:#a31515">'SCORE'</span></div><div class="cl" style="top:397.40px;left:0;width:30.30px;text-align:right;color:#237893">24</div><div class="b" style="left:52.15px;top:396.90px;width:1px;height:17.1px;background:#d3d3d3"></div><div class="b" style="left:67.32px;top:396.90px;width:1px;height:17.1px;background:#d3d3d3"></div><div class="b" style="left:82.49px;top:396.90px;width:1px;height:17.1px;background:#d3d3d3"></div><div class="b" style="left:97.66px;top:396.90px;width:1px;height:17.1px;background:#d3d3d3"></div><div class="b" style="left:112.83px;top:396.90px;width:1px;height:17.1px;background:#d3d3d3"></div><div class="cl" style="top:396.90px;left:52.15px;color:#000">          }</div><div class="cl" style="top:414.50px;left:0;width:30.30px;text-align:right;color:#237893">25</div><div class="b" style="left:52.15px;top:414.00px;width:1px;height:17.1px;background:#d3d3d3"></div><div class="b" style="left:67.32px;top:414.00px;width:1px;height:17.1px;background:#d3d3d3"></div><div class="b" style="left:82.49px;top:414.00px;width:1px;height:17.1px;background:#d3d3d3"></div><div class="b" style="left:97.66px;top:414.00px;width:1px;height:17.1px;background:#d3d3d3"></div><div class="cl" style="top:414.00px;left:52.15px;color:#000">        ]</div><div class="cl" style="top:431.60px;left:0;width:30.30px;text-align:right;color:#237893">26</div><div class="b" style="left:52.15px;top:431.10px;width:1px;height:17.1px;background:#d3d3d3"></div><div class="b" style="left:67.32px;top:431.10px;width:1px;height:17.1px;background:#d3d3d3"></div><div class="b" style="left:82.49px;top:431.10px;width:1px;height:17.1px;background:#d3d3d3"></div><div class="cl" style="top:431.10px;left:52.15px;color:#000">      }</div><div class="cl" style="top:448.70px;left:0;width:30.30px;text-align:right;color:#237893">27</div><div class="b" style="left:52.15px;top:448.20px;width:1px;height:17.1px;background:#d3d3d3"></div><div class="b" style="left:67.32px;top:448.20px;width:1px;height:17.1px;background:#d3d3d3"></div><div class="cl" style="top:448.20px;left:52.15px;color:#000">    ]</div><div class="cl" style="top:465.80px;left:0;width:30.30px;text-align:right;color:#237893">28</div><div class="b" style="left:52.15px;top:465.30px;width:1px;height:17.1px;background:#d3d3d3"></div><div class="cl" style="top:465.30px;left:52.15px;color:#000">  },</div><div class="cl" style="top:482.90px;left:0;width:30.30px;text-align:right;color:#237893">29</div><div class="b" style="left:52.15px;top:482.40px;width:1px;height:17.1px;background:#d3d3d3"></div><div class="cl" style="top:482.40px;left:52.15px;color:#000">  unsubscribe: () =&gt; {</div><div class="cl" style="top:500.00px;left:0;width:30.30px;text-align:right;color:#237893">30</div><div class="b" style="left:52.15px;top:499.50px;width:1px;height:17.1px;background:#d3d3d3"></div><div class="b" style="left:67.32px;top:499.50px;width:1px;height:17.1px;background:#d3d3d3"></div><div class="cl" style="top:499.50px;left:52.15px;color:#000">    console.log(<span style="color:#a31515">'unsubscribeFunction'</span>)</div><div class="cl" style="top:517.10px;left:0;width:30.30px;text-align:right;color:#237893">31</div><div class="b" style="left:52.15px;top:516.60px;width:1px;height:17.1px;background:#d3d3d3"></div><div class="cl" style="top:516.60px;left:52.15px;color:#000">  }</div><div class="b" style="left:158.14px;top:159.30px;width:1.3px;height:14.50px;background:#000"></div></div><div class="b" style="left:625.60px;top:0;width:82.40px;height:516.5px;background:#f4f5f5;box-shadow:-3px 0 4px -2px rgba(0,0,0,0.12)"></div><svg class="ic" shape-rendering="crispEdges" style="left:0;top:0;width:708px;height:520.5px;overflow:hidden" viewBox="0 0 708 520.5"><rect x="634" y="27" width="74" height="3" fill="#d3e3f7"/><rect x="634" y="0" width="3" height="2" fill="#6060ff"/><rect x="638" y="0" width="5" height="2" fill="#6e6f70"/><rect x="644" y="0" width="1" height="2" fill="#6e6f70"/><rect x="646" y="0" width="2" height="2" fill="#6e6f70"/><rect x="634" y="3" width="5" height="2" fill="#6060ff"/><rect x="640" y="3" width="6" height="2" fill="#6e6f70"/><rect x="647" y="3" width="1" height="2" fill="#6e6f70"/><rect x="649" y="3" width="33" height="2" fill="#6e6f70"/><rect x="683" y="3" width="2" height="2" fill="#6e6f70"/><rect x="686" y="3" width="1" height="2" fill="#6e6f70"/><rect x="636" y="6" width="5" height="2" fill="#6e6f70"/><rect x="642" y="6" width="1" height="2" fill="#6e6f70"/><rect x="644" y="6" width="17" height="2" fill="#6e6f70"/><rect x="662" y="6" width="2" height="2" fill="#6e6f70"/><rect x="665" y="6" width="6" height="2" fill="#6e6f70"/><rect x="672" y="6" width="3" height="2" fill="#6e6f70"/><rect x="676" y="6" width="8" height="2" fill="#c86a6a"/><rect x="684" y="6" width="15" height="2" fill="#6e6f70"/><rect x="700" y="6" width="2" height="2" fill="#6e6f70"/><rect x="703" y="6" width="5" height="2" fill="#6e6f70"/><rect x="634" y="9" width="3" height="2" fill="#6e6f70"/><rect x="634" y="15" width="6" height="2" fill="#6060ff"/><rect x="641" y="15" width="1" height="2" fill="#6e6f70"/><rect x="636" y="18" width="8" height="2" fill="#6e6f70"/><rect x="645" y="18" width="1" height="2" fill="#55a890"/><rect x="646" y="18" width="1" height="2" fill="#6e6f70"/><rect x="636" y="21" width="7" height="2" fill="#6e6f70"/><rect x="644" y="21" width="1" height="2" fill="#6e6f70"/><rect x="646" y="21" width="9" height="2" fill="#6e6f70"/><rect x="656" y="21" width="4" height="2" fill="#6060ff"/><rect x="661" y="21" width="2" height="2" fill="#6e6f70"/><rect x="636" y="24" width="7" height="2" fill="#6e6f70"/><rect x="644" y="24" width="1" height="2" fill="#6e6f70"/><rect x="638" y="27" width="8" height="2" fill="#6e6f70"/><rect x="647" y="27" width="1" height="2" fill="#6e6f70"/><rect x="640" y="30" width="10" height="2" fill="#6e6f70"/><rect x="651" y="30" width="4" height="2" fill="#c86a6a"/><rect x="656" y="30" width="8" height="2" fill="#c86a6a"/><rect x="665" y="30" width="1" height="2" fill="#c86a6a"/><rect x="667" y="30" width="5" height="2" fill="#c86a6a"/><rect x="638" y="33" width="2" height="2" fill="#6e6f70"/><rect x="638" y="36" width="7" height="2" fill="#6e6f70"/><rect x="646" y="36" width="1" height="2" fill="#6e6f70"/><rect x="640" y="39" width="1" height="2" fill="#6e6f70"/><rect x="642" y="42" width="5" height="2" fill="#6e6f70"/><rect x="648" y="42" width="10" height="2" fill="#c86a6a"/><rect x="658" y="42" width="1" height="2" fill="#6e6f70"/><rect x="642" y="45" width="5" height="2" fill="#6e6f70"/><rect x="648" y="45" width="7" height="2" fill="#c86a6a"/><rect x="655" y="45" width="1" height="2" fill="#6e6f70"/><rect x="642" y="48" width="7" height="2" fill="#6e6f70"/><rect x="650" y="48" width="1" height="2" fill="#6e6f70"/><rect x="644" y="51" width="10" height="2" fill="#6e6f70"/><rect x="655" y="51" width="9" height="2" fill="#c86a6a"/><rect x="642" y="54" width="2" height="2" fill="#6e6f70"/><rect x="642" y="57" width="5" height="2" fill="#6e6f70"/><rect x="648" y="57" width="1" height="2" fill="#6e6f70"/><rect x="644" y="60" width="1" height="2" fill="#6e6f70"/><rect x="646" y="63" width="6" height="2" fill="#6e6f70"/><rect x="653" y="63" width="4" height="2" fill="#55a8a8"/><rect x="657" y="63" width="25" height="2" fill="#6e6f70"/><rect x="683" y="63" width="1" height="2" fill="#6e6f70"/><rect x="685" y="63" width="1" height="2" fill="#55a890"/><rect x="686" y="63" width="1" height="2" fill="#6e6f70"/><rect x="688" y="63" width="1" height="2" fill="#6e6f70"/><rect x="690" y="63" width="3" height="2" fill="#55a890"/><rect x="693" y="63" width="1" height="2" fill="#6e6f70"/><rect x="695" y="63" width="1" height="2" fill="#6e6f70"/><rect x="697" y="63" width="3" height="2" fill="#55a890"/><rect x="700" y="63" width="1" height="2" fill="#6e6f70"/><rect x="646" y="66" width="5" height="2" fill="#6e6f70"/><rect x="652" y="66" width="7" height="2" fill="#c86a6a"/><rect x="644" y="69" width="1" height="2" fill="#6e6f70"/><rect x="642" y="72" width="1" height="2" fill="#6e6f70"/><rect x="640" y="75" width="1" height="2" fill="#6e6f70"/><rect x="638" y="78" width="1" height="2" fill="#6e6f70"/><rect x="636" y="81" width="2" height="2" fill="#6e6f70"/><rect x="636" y="84" width="12" height="2" fill="#6e6f70"/><rect x="649" y="84" width="2" height="2" fill="#6e6f70"/><rect x="652" y="84" width="2" height="2" fill="#6e6f70"/><rect x="655" y="84" width="1" height="2" fill="#6e6f70"/><rect x="638" y="87" width="12" height="2" fill="#6e6f70"/><rect x="650" y="87" width="21" height="2" fill="#c86a6a"/><rect x="671" y="87" width="1" height="2" fill="#6e6f70"/><rect x="636" y="90" width="1" height="2" fill="#6e6f70"/><rect x="634" y="93" width="1" height="2" fill="#6e6f70"/></svg><div class="b" style="left:710.20px;top:76.80px;width:12px;height:1.3px;background:#555"></div></div>
<svg class="ic" style="left:200px;top:120px;width:345px;height:300px;font-family:'Liberation Sans', sans-serif;will-change:transform;overflow:hidden" viewBox="200 120 345 300"><path d="M265.57,395.33A150.80,150.80,0,1,1,478.83,395.33" fill="none" stroke="#E6EBF8" stroke-width="9.4"/><line x1="266.41" y1="376.22" x2="270.57" y2="372.78" stroke="#63677A" stroke-width="1.05"/><line x1="258.64" y1="365.87" x2="263.11" y2="362.84" stroke="#63677A" stroke-width="1.05"/><line x1="251.88" y1="354.84" x2="256.62" y2="352.24" stroke="#63677A" stroke-width="1.05"/><line x1="246.19" y1="343.23" x2="251.15" y2="341.08" stroke="#63677A" stroke-width="1.05"/><line x1="238.21" y1="318.65" x2="243.48" y2="317.47" stroke="#63677A" stroke-width="1.05"/><line x1="235.98" y1="305.91" x2="241.34" y2="305.23" stroke="#63677A" stroke-width="1.05"/><line x1="234.97" y1="293.01" x2="240.37" y2="292.84" stroke="#63677A" stroke-width="1.05"/><line x1="235.17" y1="280.08" x2="240.56" y2="280.42" stroke="#63677A" stroke-width="1.05"/><line x1="239.21" y1="254.55" x2="244.44" y2="255.90" stroke="#63677A" stroke-width="1.05"/><line x1="243.02" y1="242.19" x2="248.10" y2="244.02" stroke="#63677A" stroke-width="1.05"/><line x1="247.97" y1="230.24" x2="252.85" y2="232.54" stroke="#63677A" stroke-width="1.05"/><line x1="254.02" y1="218.81" x2="258.67" y2="221.56" stroke="#63677A" stroke-width="1.05"/><line x1="269.21" y1="197.90" x2="273.26" y2="201.47" stroke="#63677A" stroke-width="1.05"/><line x1="278.21" y1="188.61" x2="281.91" y2="192.55" stroke="#63677A" stroke-width="1.05"/><line x1="288.05" y1="180.21" x2="291.36" y2="184.48" stroke="#63677A" stroke-width="1.05"/><line x1="298.63" y1="172.77" x2="301.52" y2="177.33" stroke="#63677A" stroke-width="1.05"/><line x1="321.66" y1="161.04" x2="323.64" y2="166.06" stroke="#63677A" stroke-width="1.05"/><line x1="333.89" y1="156.85" x2="335.40" y2="162.04" stroke="#63677A" stroke-width="1.05"/><line x1="346.47" y1="153.83" x2="347.48" y2="159.14" stroke="#63677A" stroke-width="1.05"/><line x1="359.28" y1="152.01" x2="359.79" y2="157.39" stroke="#63677A" stroke-width="1.05"/><line x1="385.12" y1="152.01" x2="384.61" y2="157.39" stroke="#63677A" stroke-width="1.05"/><line x1="397.93" y1="153.83" x2="396.92" y2="159.14" stroke="#63677A" stroke-width="1.05"/><line x1="410.51" y1="156.85" x2="409.00" y2="162.04" stroke="#63677A" stroke-width="1.05"/><line x1="422.74" y1="161.04" x2="420.76" y2="166.06" stroke="#63677A" stroke-width="1.05"/><line x1="445.77" y1="172.77" x2="442.88" y2="177.33" stroke="#63677A" stroke-width="1.05"/><line x1="456.35" y1="180.21" x2="453.04" y2="184.48" stroke="#63677A" stroke-width="1.05"/><line x1="466.19" y1="188.61" x2="462.49" y2="192.55" stroke="#63677A" stroke-width="1.05"/><line x1="475.19" y1="197.90" x2="471.14" y2="201.47" stroke="#63677A" stroke-width="1.05"/><line x1="490.38" y1="218.81" x2="485.73" y2="221.56" stroke="#63677A" stroke-width="1.05"/><line x1="496.43" y1="230.24" x2="491.55" y2="232.54" stroke="#63677A" stroke-width="1.05"/><line x1="501.38" y1="242.19" x2="496.30" y2="244.02" stroke="#63677A" stroke-width="1.05"/><line x1="505.19" y1="254.55" x2="499.96" y2="255.90" stroke="#63677A" stroke-width="1.05"/><line x1="509.23" y1="280.08" x2="503.84" y2="280.42" stroke="#63677A" stroke-width="1.05"/><line x1="509.43" y1="293.01" x2="504.03" y2="292.84" stroke="#63677A" stroke-width="1.05"/><line x1="508.42" y1="305.91" x2="503.06" y2="305.23" stroke="#63677A" stroke-width="1.05"/><line x1="506.19" y1="318.65" x2="500.92" y2="317.47" stroke="#63677A" stroke-width="1.05"/><line x1="498.21" y1="343.23" x2="493.25" y2="341.08" stroke="#63677A" stroke-width="1.05"/><line x1="492.52" y1="354.84" x2="487.78" y2="352.24" stroke="#63677A" stroke-width="1.05"/><line x1="485.76" y1="365.87" x2="481.29" y2="362.84" stroke="#63677A" stroke-width="1.05"/><line x1="477.99" y1="376.22" x2="473.83" y2="372.78" stroke="#63677A" stroke-width="1.05"/><line x1="275.11" y1="385.79" x2="281.48" y2="379.42" stroke="#63677A" stroke-width="2.7"/><text x="284.66" y="379.37" text-anchor="start" font-size="11.0" fill="#464646">0</text><line x1="241.62" y1="331.13" x2="250.18" y2="328.35" stroke="#63677A" stroke-width="2.7"/><text x="254.46" y="330.09" text-anchor="start" font-size="11.0" fill="#464646">10</text><line x1="236.59" y1="267.22" x2="245.48" y2="268.63" stroke="#63677A" stroke-width="2.7"/><text x="249.92" y="272.47" text-anchor="start" font-size="11.0" fill="#464646">20</text><line x1="261.12" y1="208.00" x2="268.40" y2="213.29" stroke="#63677A" stroke-width="2.7"/><text x="272.04" y="219.07" text-anchor="start" font-size="11.0" fill="#464646">30</text><line x1="309.87" y1="166.36" x2="313.95" y2="174.38" stroke="#63677A" stroke-width="2.7"/><text x="316.00" y="187.30" text-anchor="start" font-size="11.0" fill="#464646">40</text><line x1="372.20" y1="151.40" x2="372.20" y2="160.40" stroke="#63677A" stroke-width="2.7"/><text x="372.20" y="173.81" text-anchor="middle" font-size="11.0" fill="#464646">50</text><line x1="434.53" y1="166.36" x2="430.45" y2="174.38" stroke="#63677A" stroke-width="2.7"/><text x="428.40" y="187.30" text-anchor="end" font-size="11.0" fill="#464646">60</text><line x1="483.28" y1="208.00" x2="476.00" y2="213.29" stroke="#63677A" stroke-width="2.7"/><text x="472.36" y="219.07" text-anchor="end" font-size="11.0" fill="#464646">70</text><line x1="507.81" y1="267.22" x2="498.92" y2="268.63" stroke="#63677A" stroke-width="2.7"/><text x="494.48" y="272.47" text-anchor="end" font-size="11.0" fill="#464646">80</text><line x1="502.78" y1="331.13" x2="494.22" y2="328.35" stroke="#63677A" stroke-width="2.7"/><text x="489.94" y="330.09" text-anchor="end" font-size="11.0" fill="#464646">90</text><line x1="469.29" y1="385.79" x2="462.92" y2="379.42" stroke="#63677A" stroke-width="2.7"/><text x="459.74" y="379.37" text-anchor="end" font-size="11.0" fill="#464646">100</text><polygon points="369.20,299.08 367.01,287.20 398.40,198.03 377.39,290.20" fill="#5470c6"/><text x="371.90" y="323.00" text-anchor="middle" font-size="14.6" fill="#464646">SCORE</text><text x="371.80" y="358.12" text-anchor="middle" font-size="27.2" font-weight="bold" fill="#464646">55.97</text></svg>
<div class="b " style="left:1507.80px;top:373.00px;width:5.00px;height:640.00px;background:rgb(226,227,229);border-radius:2.5px"></div>
</div></body></html>
